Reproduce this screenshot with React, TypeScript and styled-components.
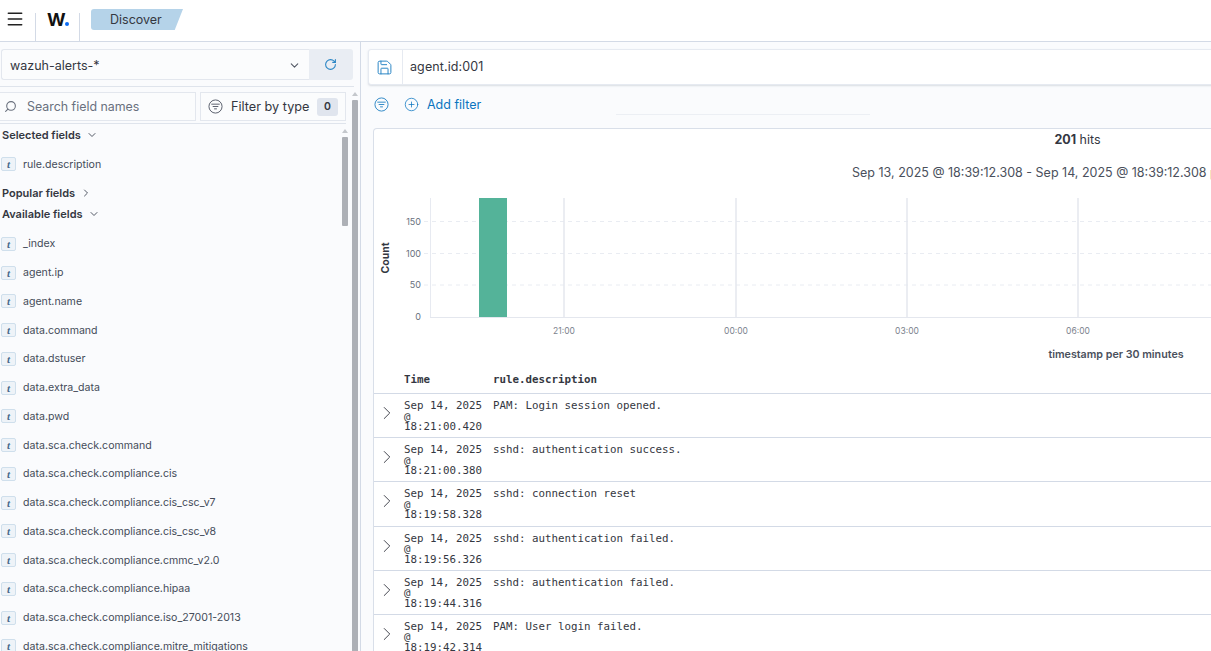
import React from "react";
import styled, { createGlobalStyle } from "styled-components";
import { ChevronDown, ChevronRight, CirclePlus, Menu, RotateCw, Save, Search } from "lucide-react";

const Global = createGlobalStyle`
  html, body { margin: 0; padding: 0; background: #fff; }
  body { font-family: Inter, "Liberation Sans", sans-serif; color: #343741; }
`;

const Page = styled.div`
  width: 1211px; height: 651px; overflow: hidden; display: flex; flex-direction: column; background: #fafbfd;
`;
const Header = styled.header`
  height: 41px; flex: none; background: #fff; border-bottom: 1px solid #d3dae6; display: flex; align-items: stretch;
`;
const MenuCell = styled.div`
  width: 36px; height: 28px; margin-top: 13px; box-sizing: border-box; border-right: 1px solid #d3dae6; position: relative;
  svg { position: absolute; top: -4px; left: 5px; }
`;
const LogoCell = styled.div`
  width: 43px; height: 28px; margin-top: 13px; border-right: 1px solid #d3dae6; position: relative;
`;
const LogoMark = styled.span`
  position: absolute; left: 11px; top: -2px; font-size: 18px; line-height: 18px; font-weight: 700; color: #111; letter-spacing: -0.5px;
`;
const LogoDot = styled.i`
  position: absolute; left: 29px; top: 9px; width: 4px; height: 4px; border-radius: 50%; background: #0a6cf5;
`;
const Crumb = styled.div`
  margin: 9px 0 0 11px; width: 92px; height: 21px; background: #b5d3e9; border-radius: 3px 0 0 3px;
  clip-path: polygon(0 0, 100% 0, 91% 100%, 0 100%); font-size: 12.5px; line-height: 21px; padding-left: 19px; box-sizing: border-box; color: #343741;
`;
const Body = styled.div`
  flex: 1; min-height: 0; display: flex;
`;
const Side = styled.aside`
  width: 360px; flex: none; border-right: 1px solid #d3dae6; display: flex; flex-direction: column; min-height: 0; box-sizing: content-box;
`;
const IndexRow = styled.div`
  flex: none; height: 45px; box-sizing: border-box; margin-right: 6px; border-bottom: 1px solid #dfe4ec; padding: 7px 0 0 1px; display: flex; align-items: flex-start;
`;
const IndexSelect = styled.div`
  width: 308px; height: 31px; box-sizing: border-box; background: #fbfcfd; border: 1px solid #e3e7ee; border-right: 0; border-radius: 3px 0 0 3px;
  display: flex; align-items: center; justify-content: space-between; padding: 1px 8px 0 8px; font-size: 12.5px; color: #343741;
`;
const RefreshBtn = styled.div`
  width: 44px; height: 31px; padding-right: 1px; box-sizing: border-box; background: #e9edf3; border-radius: 0 3px 3px 0; display: flex; align-items: center; justify-content: center; color: #2b86c5;
`;
const SideLower = styled.div`
  flex: 1; min-height: 0; display: flex;
`;
const SideMain = styled.div`
  width: 351px; flex: none; display: flex; flex-direction: column; min-height: 0;
`;
const SearchRow = styled.div`
  flex: none; height: 37px; box-sizing: border-box; display: flex; gap: 4px; padding: 5px 0 0 0; border-bottom: 1px solid #dfe4ec; margin-right: 5px;
`;
const SearchBox = styled.div`
  width: 196px; height: 29px; box-sizing: border-box; background: #fbfcfd; border: 1px solid #e3e7ee; border-left: 0; display: flex; align-items: center; gap: 10px; padding-left: 4px;
  font-size: 12.4px; color: #69707d; svg { color: #69707d; transform: scaleX(-1); }
`;
const TypeFilter = styled.div`
  width: 146px; height: 29px; box-sizing: border-box; background: #fbfcfd; border: 1px solid #e3e7ee; display: flex; align-items: center; padding: 0 7px 0 7px; font-size: 12.7px; color: #343741;
`;
const TypeLabel = styled.span`
  margin-left: 8px; flex: 1; white-space: nowrap;
`;
const CountBadge = styled.span`
  width: 21px; height: 18px; background: #e0e5ee; border-radius: 3px; font-size: 10.5px; font-weight: 600; line-height: 18px; text-align: center;
`;
const ListArea = styled.div`
  flex: 1; min-height: 0; display: flex;
`;
const FieldList = styled.div`
  width: 341px; flex: none; overflow: hidden; padding-top: 4px;
`;
const SectionTitle = styled.div<{ $top: number }>`
  display: flex; align-items: center; gap: 5px; height: 14px; margin-top: ${p => p.$top}px; padding-left: 2px; font-size: 11px; font-weight: 600; color: #343741; white-space: nowrap;
  svg { color: #535966; }
`;
const FieldRow = styled.div`
  height: 28.77px; display: flex; align-items: center; gap: 7px; padding-left: 1px; font-size: 10.6px; color: #444b59; white-space: nowrap;
`;
const SelectedRow = styled(FieldRow)`
  margin-top: 8px;
`;
const FieldGroup = styled.div`
  margin-top: 8.6px;
`;
const Token = styled.span`
  width: 15px; height: 14px; flex: none; background: #eef3f8; border: 1px solid #cfdfec; border-radius: 2px; box-sizing: border-box;
  font: italic 700 11px/12px "Liberation Serif", serif; text-align: center; color: #47698a;
`;
const Track = styled.div<{ $arrowTop: number; $thumbTop: number; $thumbH: number }>`
  width: 9px; flex: none; position: relative;
  &::before { content: ""; position: absolute; left: 1px; top: ${p => p.$arrowTop}px; border: 3.5px solid transparent; border-top: 0; border-bottom: 4px solid #c4c7cc; }
  &::after { content: ""; position: absolute; left: 1px; width: 6px; top: ${p => p.$thumbTop}px; height: ${p => p.$thumbH}px; background: #adb0b6; border-radius: 1px; }
`;
const Main = styled.main`
  width: 1450px; flex: none; padding: 7px 0 0 7px; box-sizing: border-box; display: flex; flex-direction: column; align-items: flex-start;
`;
const QueryBar = styled.div`
  width: 1420px; height: 36px; flex: none; box-sizing: border-box; background: #fff; border: 1px solid #e6eaf1; border-radius: 3px; box-shadow: 0 1px 2px rgba(152,162,179,.35);
  display: flex; align-items: stretch; font-size: 12.5px; color: #343741;
`;
const SaveCell = styled.div`
  width: 34px; padding-right: 2px; box-sizing: border-box; border-right: 1px solid #e6eaf1; display: flex; align-items: center; justify-content: center; color: #2b86c5;
`;
const QueryText = styled.div`
  display: flex; align-items: center; padding: 0 0 2px 7px; letter-spacing: .1px;
`;
const FilterRow = styled.div`
  height: 43px; flex: none; box-sizing: border-box; padding: 0 0 5px 6px; display: flex; align-items: center; color: #0b75c0; font-size: 12.5px; position: relative; width: 800px;
  &::after { content: ""; position: absolute; left: 248px; top: 29px; width: 254px; height: 1px; background: #eceff4; }
`;
const AddFilter = styled.span`
  display: flex; align-items: center; gap: 8px; margin-left: 15px;
`;
const Card = styled.section`
  width: 1405px; margin-left: 5px; flex: 1; background: #fff; border: 1px solid #d9dfe9; border-bottom: 0; border-radius: 4px 0 0 0; box-sizing: border-box; overflow: hidden;
`;
const Hits = styled.div`
  height: 21px; padding: 3px 0 0 4px; text-align: center; font-size: 12.5px; line-height: 15px; color: #343741; strong { font-weight: 700; }
`;
const Range = styled.div`
  margin-top: 12px; height: 15px; text-align: center; font-size: 12.5px; line-height: 15px; color: #4a505c; white-space: nowrap;
`;
const ChartSvg = styled.svg`
  display: block; text { font-family: Inter, sans-serif; }
`;
const Table = styled.div`
  font-family: "DejaVu Sans Mono", monospace; font-size: 10.8px; line-height: 10.5px; color: #343741; margin-top: 4px;
`;
const Row = styled.div`
  display: grid; grid-template-columns: 30px 89px 1fr; box-sizing: border-box; border-bottom: 1px solid #d3dae6;
`;
const HeadRow = styled(Row)`
  height: 26px; padding-top: 7px; font-weight: 700;
`;
const DataRow = styled(Row)`
  height: 44.2px; padding-top: 7px;
`;
const Toggle = styled.div`
  padding: 1px 0 0 2px;
`;
const TimeCell = styled.div`
  padding-right: 11px;
`;

const FilterIcon = ({ color }: { color: string }) => (
  <svg width="15" height="15" viewBox="0 0 16 16" fill="none" stroke={color} strokeWidth="1">
    <circle cx="8" cy="8" r="7" />
    <path d="M3.5 5.5h9M5 8h6M6.5 10.5h3" />
  </svg>
);

const FIELDS = ["_index", "agent.ip", "agent.name", "data.command", "data.dstuser", "data.extra_data", "data.pwd", "data.sca.check.command", "data.sca.check.compliance.cis", "data.sca.check.compliance.cis_csc_v7", "data.sca.check.compliance.cis_csc_v8", "data.sca.check.compliance.cmmc_v2.0", "data.sca.check.compliance.hipaa", "data.sca.check.compliance.iso_27001-2013", "data.sca.check.compliance.mitre_mitigations"];
const ROWS = [
  ["Sep 14, 2025 @ 18:21:00.420", "PAM: Login session opened."],
  ["Sep 14, 2025 @ 18:21:00.380", "sshd: authentication success."],
  ["Sep 14, 2025 @ 18:19:58.328", "sshd: connection reset"],
  ["Sep 14, 2025 @ 18:19:56.326", "sshd: authentication failed."],
  ["Sep 14, 2025 @ 18:19:44.316", "sshd: authentication failed."],
  ["Sep 14, 2025 @ 18:19:42.314", "PAM: User login failed."],
];
const YT = [[150, 221.5], [100, 253.5], [50, 285], [0, 316.5]] as const;
const XT = [["21:00", 564], ["00:00", 736], ["03:00", 907], ["06:00", 1078]] as const;
const OX = 374, OY = 180;

const Chart = () => (
  <ChartSvg width="1300" height="184" viewBox={`${OX} ${OY} 1300 184`}>
    {YT.slice(0, 3).map(([, y]) => (
      <line key={y} x1="424" x2="1300" y1={y} y2={y} stroke="#e9ecf2" strokeDasharray="4 4" />
    ))}
    <line x1="430.5" x2="430.5" y1="198" y2="317" stroke="#e7eaf1" />
    {XT.map(([, x]) => <line key={x} x1={x} x2={x} y1="198" y2="317" stroke="#e4e7ee" strokeWidth="1.5" />)}
    <line x1="430" x2="1300" y1="317.5" y2="317.5" stroke="#e4e7ee" />
    <rect x="479" y="198" width="28" height="119" fill="#54b399" />
    {YT.map(([v, y]) => <text key={v} x="421" y={y + 3} fontSize="9" fill="#69707d" textAnchor="end">{v}</text>)}
    {XT.map(([t, x]) => <text key={t} x={x} y="334" fontSize="8.5" fill="#7c828d" textAnchor="middle">{t}</text>)}
    <text transform="translate(389 258) rotate(-90)" fontSize="10.5" fontWeight="700" fill="#343741" textAnchor="middle">Count</text>
    <text x="1116" y="358" fontSize="10.7" fontWeight="600" fill="#4a505c" textAnchor="middle">timestamp per 30 minutes</text>
  </ChartSvg>
);

export default function App() {
  return (
    <Page>
      <Global />
      <Header>
        <MenuCell><Menu size={20} strokeWidth={1.8} color="#222" /></MenuCell>
        <LogoCell><LogoMark>W</LogoMark><LogoDot /></LogoCell>
        <Crumb>Discover</Crumb>
      </Header>
      <Body>
        <Side>
          <IndexRow>
            <IndexSelect>wazuh-alerts-*<ChevronDown size={13} color="#535966" /></IndexSelect>
            <RefreshBtn><RotateCw size={13} /></RefreshBtn>
          </IndexRow>
          <SideLower>
            <SideMain>
              <SearchRow>
                <SearchBox><Search size={13} />Search field names</SearchBox>
                <TypeFilter><FilterIcon color="#535966" /><TypeLabel>Filter by type</TypeLabel><CountBadge>0</CountBadge></TypeFilter>
              </SearchRow>
              <ListArea>
                <FieldList>
                  <SectionTitle $top={0}>Selected fields <ChevronDown size={12} /></SectionTitle>
                  <SelectedRow><Token>t</Token>rule.description</SelectedRow>
                  <SectionTitle $top={7}>Popular fields <ChevronRight size={12} /></SectionTitle>
                  <SectionTitle $top={7}>Available fields <ChevronDown size={12} /></SectionTitle>
                  <FieldGroup>
                    {FIELDS.map(f => <FieldRow key={f}><Token>t</Token>{f}</FieldRow>)}
                  </FieldGroup>
                </FieldList>
                <Track $arrowTop={5} $thumbTop={13} $thumbH={89} />
              </ListArea>
            </SideMain>
            <Track $arrowTop={5} $thumbTop={13} $thumbH={560} />
          </SideLower>
        </Side>
        <Main>
          <QueryBar>
            <SaveCell><Save size={17} strokeWidth={1.4} /></SaveCell>
            <QueryText>agent.id:001</QueryText>
          </QueryBar>
          <FilterRow>
            <FilterIcon color="#2b86c5" />
            <AddFilter><CirclePlus size={15} strokeWidth={1.2} />Add filter</AddFilter>
          </FilterRow>
          <Card>
            <Hits><strong>201</strong> hits</Hits>
            <Range>Sep 13, 2025 @ 18:39:12.308 - Sep 14, 2025 @ 18:39:12.308 per 30 minutes</Range>
            <Chart />
            <Table>
              <HeadRow><span /><span>Time</span><span>rule.description</span></HeadRow>
              {ROWS.map(([t, d]) => (
                <DataRow key={t}>
                  <Toggle><ChevronRight size={22} strokeWidth={1} /></Toggle>
                  <TimeCell>{t}</TimeCell>
                  <span>{d}</span>
                </DataRow>
              ))}
            </Table>
          </Card>
        </Main>
      </Body>
    </Page>
  );
}
